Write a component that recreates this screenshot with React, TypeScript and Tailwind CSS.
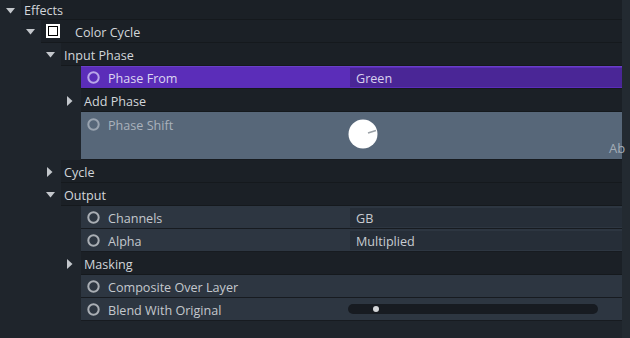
import React from 'react';

type Twist = 'down' | 'right' | null;

function Tri({ dir }: { dir: Twist }) {
    if (dir === 'down') {
        return (
            <svg width="9" height="6" viewBox="0 0 9 6" className="mr-[6px] mt-[1px]">
                <path d="M0 0 L9 0 L4.5 5.5 Z" fill="#c3c7cc" />
            </svg>
        );
    }
    if (dir === 'right') {
        return (
            <svg width="6" height="10" viewBox="0 0 6 10" className="mr-[8px] mt-[1px]">
                <path d="M0 0 L5.5 5 L0 10 Z" fill="#c3c7cc" />
            </svg>
        );
    }
    return null;
}

function Ring({ color }: { color: string }) {
    return (
        <svg width="13" height="13" viewBox="0 0 13 13" className="shrink-0">
            <circle cx="6.5" cy="6.5" r="5.2" fill="none" stroke={color} strokeWidth="2" />
        </svg>
    );
}

const indents: Record<number, string> = {
    0: 'w-[21px]',
    1: 'w-[41px]',
    2: 'w-[61px]',
    3: 'w-[81px]',
};

function Group({ depth, label, twist, first }: { depth: number; label: string; twist: Twist; first?: boolean }) {
    return (
        <div className={`flex ${first ? 'h-[20px]' : 'h-[23px]'}`}>
            <div className={`${indents[depth]} shrink-0 flex items-center justify-end`}>
                <Tri dir={twist} />
            </div>
            <div className="flex-1 flex items-center pl-[3px] bg-[#1b2026] border-b border-[#15191d] text-[#d2d6da]">
                <span className="pt-[4px]">{label}</span>
            </div>
        </div>
    );
}

function Param({ label, value, slider }: { label: string; value?: string; slider?: boolean }) {
    return (
        <div className="flex h-[23px]">
            <div className="w-[81px] shrink-0" />
            <div className="flex-1 flex items-center bg-[#2d3641] border-b border-[#171b20]">
                <div className="w-[269px] shrink-0 flex items-center gap-[8px] pl-[6px] text-[#c4c8cd]">
                    <Ring color="#a9aeb4" />
                    <span className="pt-[4px]">{label}</span>
                </div>
                {value && (
                    <div className="flex-1 self-stretch mt-[2px] mb-[1px] bg-[#262e38] flex items-center pl-[6px] text-[#c8ccd1]">
                        <span className="pt-[3px]">{value}</span>
                    </div>
                )}
                {slider && (
                    <div className="ml-[-2px] w-[250px] h-[10px] rounded-full bg-[#171b21] flex items-center pl-[25px]">
                        <div className="w-[6px] h-[6px] rounded-full bg-[#d4d6d9]" />
                    </div>
                )}
            </div>
        </div>
    );
}

export default function App() {
    return (
        <div
            className="w-[630px] h-[338px] flex bg-[#1f252c] overflow-hidden text-[12.6px] leading-none"
            style={{ fontFamily: '"Open Sans", "Noto Sans", sans-serif' }}
        >
            <div className="flex-1 flex flex-col">
                <Group depth={0} label="Effects" twist="down" first />

                <div className="flex h-[23px]">
                    <div className="w-[41px] shrink-0 flex items-center justify-end">
                        <Tri dir="down" />
                    </div>
                    <div className="flex-1 flex items-center bg-[#1b2026] border-b border-[#15191d] text-[#d2d6da]">
                        <div className="ml-[5px] w-[14px] h-[14px] border-2 border-white bg-black flex items-center justify-center">
                            <div className="w-[8px] h-[8px] bg-white" />
                        </div>
                        <span className="ml-[15px] pt-[4px]">Color Cycle</span>
                    </div>
                </div>

                <Group depth={2} label="Input Phase" twist="down" />

                <div className="flex h-[23px]">
                    <div className="w-[81px] shrink-0" />
                    <div className="flex-1 flex items-center bg-[#5b2db9] border-t border-[#6a3fc7] border-b-[#15191d] border-b">
                        <div className="w-[269px] shrink-0 flex items-center gap-[8px] pl-[6px] text-[#ddd6f2]">
                            <Ring color="#b9a6e8" />
                            <span className="pt-[4px]">Phase From</span>
                        </div>
                        <div className="flex-1 self-stretch mt-[1px] mb-[1px] bg-[#4a2696] flex items-center pl-[6px] text-[#d8d0ee]">
                            <span className="pt-[3px]">Green</span>
                        </div>
                    </div>
                </div>

                <Group depth={3} label="Add Phase" twist="right" />

                <div className="flex h-[48px]">
                    <div className="w-[81px] shrink-0" />
                    <div className="flex-1 flex bg-[#576779] border-b border-[#171b20]">
                        <div className="w-[269px] shrink-0 flex items-start gap-[8px] pl-[6px] pt-[6px] text-[#aab2bc]">
                            <Ring color="#9aa4b0" />
                            <span className="mt-[2px]">Phase Shift</span>
                        </div>
                        <div className="flex-1 relative">
                            <svg width="30" height="30" viewBox="0 0 30 30" className="absolute left-[-2px] top-[7px]">
                                <circle cx="15" cy="15" r="14.5" fill="#ffffff" />
                                <line x1="20" y1="14" x2="28" y2="11.5" stroke="#9aa0a6" strokeWidth="1.6" />
                            </svg>
                            <span className="absolute left-[259px] top-[30px] text-[13px] text-[#a3acb6]">Ab</span>
                        </div>
                    </div>
                </div>

                <Group depth={2} label="Cycle" twist="right" />
                <Group depth={2} label="Output" twist="down" />
                <Param label="Channels" value="GB" />
                <Param label="Alpha" value="Multiplied" />
                <Group depth={3} label="Masking" twist="right" />
                <Param label="Composite Over Layer" />
                <Param label="Blend With Original" slider />
            </div>
            <div className="w-[8px] shrink-0 bg-[#232a31]" />
        </div>
    );
}
